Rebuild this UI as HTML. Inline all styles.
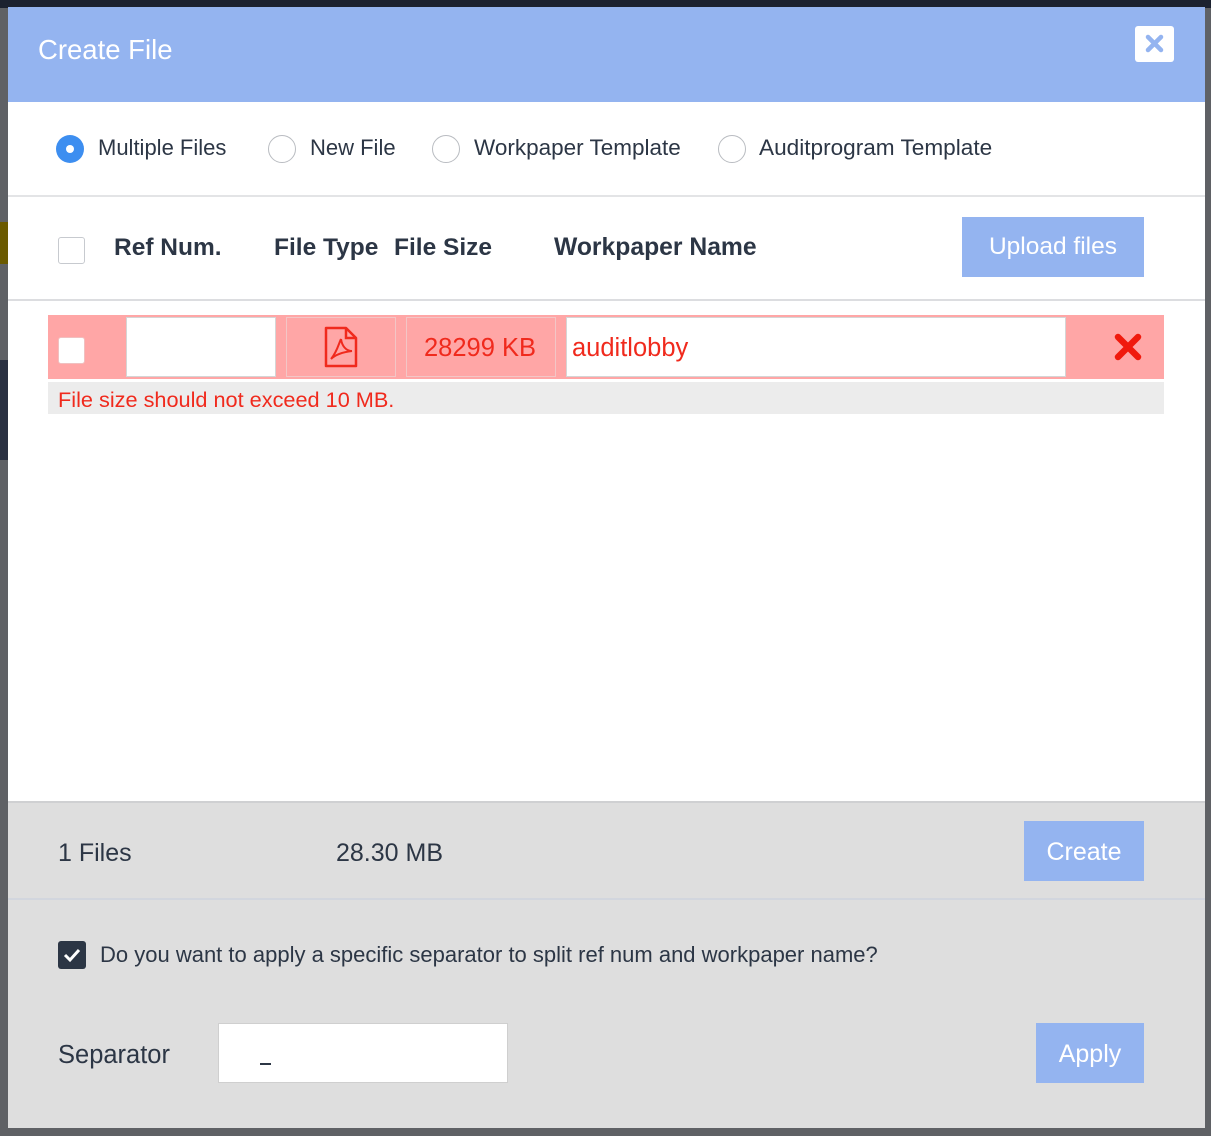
<!DOCTYPE html>
<html><head><meta charset="utf-8"><style>
*{margin:0;padding:0;box-sizing:border-box}
body{width:1211px;height:1136px;background:#5f6165;position:relative;overflow:hidden;font-family:"Liberation Sans",Arial,sans-serif;color:#2c3645}
.a{position:absolute}
.t{position:absolute;white-space:nowrap}
.radio{position:absolute;width:28px;height:28px;border-radius:50%;border:1.5px solid #b9bcc1;background:#fff}
.cb{position:absolute;width:27px;height:27px;border:1.5px solid #c7cacf;border-radius:3px;background:#fff}
.btn{position:absolute;background:#94b4f0;color:#fff;font-size:24px;text-align:center}
</style></head><body>
<div class="a" style="left:0;top:0;width:1211px;height:8px;background:#1c2230"></div>
<div class="a" style="left:0;top:222px;width:8px;height:42px;background:#6b5a00"></div>
<div class="a" style="left:0;top:360px;width:8px;height:100px;background:#2a3142"></div>

<div class="a" style="left:8px;top:7px;width:1197px;height:1121px;background:#fff"></div>
<div class="a" style="left:8px;top:7px;width:1197px;height:95px;background:#94b4f0"></div>
<div class="t" style="left:38px;top:34px;font-size:27.5px;color:#fff">Create File</div>
<div class="a" style="left:1135px;top:26px;width:39px;height:36px;background:#fff;border-radius:3px"></div>
<svg class="a" style="left:1145px;top:34px" width="19" height="19" viewBox="0 0 19 19"><path d="M3 3L16 16M16 3L3 16" stroke="#94b4f0" stroke-width="4.5" stroke-linecap="round"/></svg>

<div class="radio" style="left:56px;top:135px;border:none;background:#3d8ef0"></div>
<div class="a" style="left:66px;top:145px;width:8px;height:8px;border-radius:50%;background:#fff"></div>
<div class="t" style="left:98px;top:135px;font-size:22px">Multiple Files</div>
<div class="radio" style="left:268px;top:135px"></div>
<div class="t" style="left:310px;top:135px;font-size:22px">New File</div>
<div class="radio" style="left:432px;top:135px"></div>
<div class="t" style="left:474px;top:135px;font-size:22.5px">Workpaper Template</div>
<div class="radio" style="left:718px;top:135px"></div>
<div class="t" style="left:759px;top:135px;font-size:22.6px">Auditprogram Template</div>
<div class="a" style="left:8px;top:195px;width:1197px;height:2px;background:#e3e4e6"></div>

<div class="cb" style="left:58px;top:237px"></div>
<div class="t" style="left:114px;top:234px;font-size:24.5px;font-weight:bold">Ref Num.</div>
<div class="t" style="left:274px;top:234px;font-size:24.5px;font-weight:bold">File Type</div>
<div class="t" style="left:394px;top:234px;font-size:24.5px;font-weight:bold">File Size</div>
<div class="t" style="left:554px;top:234px;font-size:24.7px;font-weight:bold">Workpaper Name</div>
<div class="btn" style="left:962px;top:217px;width:182px;height:60px;line-height:60px;font-size:24.5px">Upload files</div>
<div class="a" style="left:8px;top:299px;width:1197px;height:2px;background:#dcdde0"></div>

<div class="a" style="left:48px;top:315px;width:1116px;height:64px;background:#ffa6a6"></div>
<div class="cb" style="left:58px;top:337px;border-color:#f0c0c0"></div>
<div class="a" style="left:126px;top:317px;width:150px;height:60px;background:#fff;border:1px solid #d5d5d5"></div>
<div class="a" style="left:286px;top:317px;width:110px;height:60px;border:1.5px solid #f3c6c6"></div>
<svg class="a" style="left:322px;top:326px" width="38" height="42" viewBox="0 0 38 42"><path d="M4 2H24L34 12V40H4Z" fill="none" stroke="#f02a1d" stroke-width="2.5" stroke-linejoin="round"/><path d="M24 2V12H34" fill="none" stroke="#f02a1d" stroke-width="2.5"/><path d="M19 13C17 17 15 26 9 33M19 13C20 20 24 25 30 25M9 33C14 28 22 26 30 25" fill="none" stroke="#f02a1d" stroke-width="2"/></svg>
<div class="a" style="left:406px;top:317px;width:150px;height:60px;border:1.5px solid #f3c6c6"></div>
<div class="t" style="left:424px;top:334px;font-size:25.5px;color:#f02a1d">28299 KB</div>
<div class="a" style="left:566px;top:317px;width:500px;height:60px;background:#fff;border:1px solid #d5d5d5"></div>
<div class="t" style="left:572px;top:334px;font-size:25.5px;color:#f02a1d">auditlobby</div>
<svg class="a" style="left:1114px;top:333px" width="28" height="28" viewBox="0 0 28 28"><path d="M4 4L24 24M24 4L4 24" stroke="#f01a0d" stroke-width="6.5" stroke-linecap="round"/></svg>
<div class="a" style="left:48px;top:382px;width:1116px;height:32px;background:#ececec"></div>
<div class="t" style="left:58px;top:387px;font-size:21.7px;color:#f02a1d">File size should not exceed 10 MB.</div>

<div class="a" style="left:8px;top:801px;width:1197px;height:327px;background:#dedede"></div>
<div class="a" style="left:8px;top:801px;width:1197px;height:2px;background:#cfd0d2"></div>
<div class="t" style="left:58px;top:839px;font-size:25px">1 Files</div>
<div class="t" style="left:336px;top:839px;font-size:25px">28.30 MB</div>
<div class="btn" style="left:1024px;top:821px;width:120px;height:60px;line-height:62px;font-size:25px">Create</div>
<div class="a" style="left:8px;top:898px;width:1197px;height:2px;background:#d2d6de"></div>
<div class="a" style="left:58px;top:941px;width:28px;height:28px;background:#2c3645;border-radius:3px"></div>
<svg class="a" style="left:62px;top:946px" width="20" height="18" viewBox="0 0 20 18"><path d="M3 9L8 14L17 4" fill="none" stroke="#fff" stroke-width="3"/></svg>
<div class="t" style="left:100px;top:942px;font-size:22px">Do you want to apply a specific separator to split ref num and workpaper name?</div>
<div class="t" style="left:58px;top:1041px;font-size:25.5px">Separator</div>
<div class="a" style="left:218px;top:1023px;width:290px;height:60px;background:#fff;border:1px solid #cfcfcf"></div>
<div class="a" style="left:260px;top:1063px;width:11px;height:2px;background:#2c3645"></div>
<div class="btn" style="left:1036px;top:1023px;width:108px;height:60px;line-height:62px;font-size:25px">Apply</div>
</body></html>
